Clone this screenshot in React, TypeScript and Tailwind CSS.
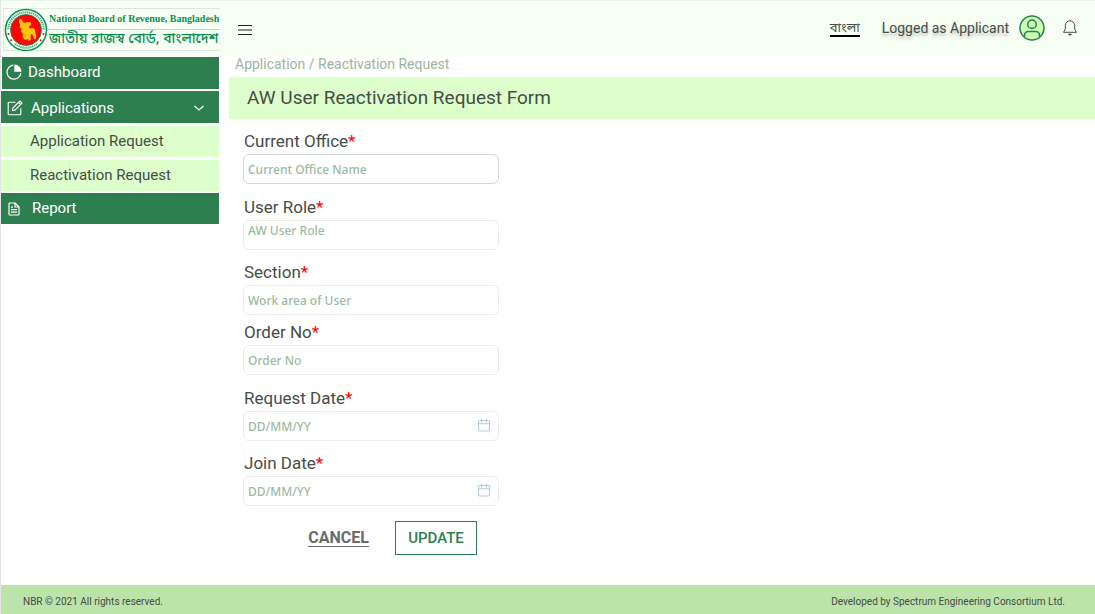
import type { ReactNode } from 'react';

type FieldProps = {
    id: string;
    label: string;
    placeholder: string;
    className?: string;
    inputClassName?: string;
    icon?: ReactNode;
};

const CalendarIcon = () => (
    <svg viewBox="0 0 14 14" className="size-3.5" fill="none" stroke="#b4cbd3" strokeWidth="1.1" strokeLinecap="round">
        <rect x="1.5" y="2.5" width="11" height="10.5" rx="1.5" />
        <path d="M1.5 5.8h11M4.5 1v3M9.5 1v3" />
    </svg>
);

const Field = ({ id, label, placeholder, className = '', inputClassName = 'border-[#ececec]', icon }: FieldProps) => (
    <div className={className}>
        <label htmlFor={id} className="block pl-px text-[17px] leading-6 text-[#464d46]">
            {label}
            <span className="text-[#ff0000]">*</span>
        </label>
        <div className="relative mt-px">
            <input
                id={id}
                type="text"
                placeholder={placeholder}
                className={`block h-[30px] w-full rounded-md border bg-white px-1 font-['Noto_Sans',sans-serif] text-xs font-medium text-[#464d46] outline-none placeholder:text-[#9dbba0] ${inputClassName}`}
            />
            {icon && <span className="pointer-events-none absolute top-[7px] right-2">{icon}</span>}
        </div>
    </div>
);

const Emblem = () => (
    <svg viewBox="0 0 44 44" className="size-11 shrink-0">
        <circle cx="22" cy="22" r="20.5" fill="#fff" stroke="#0b8f50" strokeWidth="1.6" />
        <circle
            cx="22"
            cy="22"
            r="17.7"
            fill="none"
            stroke="#4fae7f"
            strokeWidth="2.2"
            strokeDasharray="1.3 0.7"
        />
        <path d="M2.6 22a19.4 19.4 0 0 0 7 14.5l3-3.6A15 15 0 0 1 7 22zM41.4 22a19.4 19.4 0 0 1-7 14.5l-3-3.6A15 15 0 0 0 37 22z" fill="#fff" />
        <circle cx="22" cy="22" r="15.5" fill="#fb0505" stroke="#0b8f50" strokeWidth="0.8" />
        <path
            d="M15.5 10.5l2.7 1.3.4 2.4 3 .5 1.7-.7 3.3.5.9 1.8-1.7 1.5-1 2 1.6.6 2.7-.4 1.8 1.5.4 3 1.1 3.6-.9 3.4-1.5-.5-.9-3.2-1.5-2-1 2.3.2 3.6-2.1 1.3-1.1-2.2-1.5 1.2-2.4-.9-1.1-2.6.2-2.7-1.8-2.4.4-2.5-2-1.9.8-2.5-1.3-2.4.4-2.2z"
            fill="#ffc20e"
        />
        <g fill="#fb0505">
            <circle cx="4.5" cy="26" r="1" />
            <circle cx="7.2" cy="32.3" r="1" />
            <circle cx="39.5" cy="26" r="1" />
            <circle cx="36.8" cy="32.3" r="1" />
        </g>
    </svg>
);

const Logo = () => (
    <a href="#" className="mt-[7px] ml-0.5 flex h-[43px] w-[217px] items-center border border-r-0 border-[#dfe8df] text-[#0b8f50]">
        <Emblem />
        <span className="flex min-w-0 flex-1 flex-col whitespace-nowrap">
            <span className="border-b border-[#b9dcc6] pl-px font-['Liberation_Serif',serif] text-[10px] leading-5 font-bold">
                National Board of Revenue, Bangladesh
            </span>
            <span className="pl-px font-['Noto_Sans_Bengali',sans-serif] text-sm leading-5 font-medium">
                জাতীয় রাজস্ব বোর্ড, বাংলাদেশ
            </span>
        </span>
    </a>
);

const PieIcon = () => (
    <svg viewBox="0 0 16 16" className="size-4">
        <path d="M7.2 1.2A7 7 0 1 0 14.9 9.2" fill="none" stroke="#fff" strokeWidth="1.2" />
        <path d="M8.3.5v7.3h7.2A7.3 7.3 0 0 0 8.3.5z" fill="#fff" />
    </svg>
);

const EditIcon = () => (
    <svg viewBox="0 0 16 16" className="size-4" fill="none" stroke="#fff" strokeWidth="1.1" strokeLinejoin="round" strokeLinecap="round">
        <path d="M8 2.2H2.2a1 1 0 0 0-1 1v10.6a1 1 0 0 0 1 1h10.6a1 1 0 0 0 1-1V8.5" />
        <path d="M5.3 10.8l.6-2.8 7-7 2.1 2.1-7 7zM11.5 2.4l2.1 2.1" />
    </svg>
);

const ReportIcon = () => (
    <svg viewBox="0 0 12 14" className="h-3.5 w-3" fill="none" stroke="#fff" strokeWidth="1.2" strokeLinejoin="round">
        <path d="M1 1.8a.8.8 0 0 1 .8-.8H7l4 4v7.2a.8.8 0 0 1-.8.8H1.8a.8.8 0 0 1-.8-.8z" />
        <path d="M7 1v4h4M3 5.2h2M3 7.7h6M3 10.2h6" />
    </svg>
);

const Sidebar = () => (
    <nav className="w-[218px] shrink-0 text-[15px] text-white">
        <a href="#" className="mt-px ml-px flex h-8 items-center gap-1.5 bg-[#2e7f50] pb-0.5 pl-1">
            <PieIcon />
            Dashboard
        </a>
        <button type="button" className="mt-0.5 flex h-8 w-full items-center gap-2 bg-[#2e7f50] pt-0.5 pr-3.5 pl-1.5">
            <EditIcon />
            Applications
            <svg viewBox="0 0 12 12" className="ml-auto size-3" fill="none" stroke="#fff" strokeWidth="1.2">
                <path d="M1.5 4L6 8l4.5-4" />
            </svg>
        </button>
        <a href="#" className="mt-[3px] flex h-[31px] items-center bg-[#dcffcc] pl-[29px] text-[#464d46]">
            Application Request
        </a>
        <a href="#" className="mt-[3px] flex h-[31px] items-center bg-[#dcffcc] pl-[29px] text-[#464d46]">
            Reactivation Request
        </a>
        <a href="#" className="mt-0.5 flex h-[31px] items-center gap-3 bg-[#2e7f50] pl-[7px]">
            <ReportIcon />
            Report
        </a>
    </nav>
);

const Header = () => (
    <header className="flex h-14 items-start border-t border-[#eef2ec] bg-[#f7fff4]">
        <Logo />
        <button type="button" aria-label="Toggle menu" className="mt-[23px] ml-[18px]">
            <svg viewBox="0 0 14 12" className="h-3 w-3.5" stroke="#222" strokeWidth="1.2">
                <path d="M0 1.5h14M0 6h14M0 10.5h14" />
            </svg>
        </button>
        <div className="ml-auto flex h-[54px] items-center pr-[18px]">
            <a href="#" className="border-b-2 border-black pt-1 font-['Noto_Sans_Bengali',sans-serif] text-[13px] leading-3 text-[#464d46]">
                বাংলা
            </a>
            <span className="ml-[22px] text-sm text-[#464d46] text-shadow-[0_3px_3px_rgb(0_0_0_/_0.25)]">
                Logged as Applicant
            </span>
            <button type="button" aria-label="Profile" className="ml-2.5">
                <svg viewBox="0 0 26 26" className="size-[26px]" fill="#ccffb3" stroke="#2e7f50" strokeWidth="1.5">
                    <circle cx="13" cy="13" r="12" />
                    <circle cx="13" cy="9.3" r="4.3" />
                    <path d="M5.5 22.3v-2.1a3.7 3.7 0 0 1 3.7-3.7h7.6a3.7 3.7 0 0 1 3.7 3.7v2.1" />
                </svg>
            </button>
            <button type="button" aria-label="Notifications" className="ml-[18px]">
                <svg viewBox="0 0 14 16" className="h-4 w-3.5" fill="none" stroke="#464d46" strokeLinejoin="round">
                    <path d="M7 .8a4.7 4.7 0 0 0-4.7 4.7V9L.6 12.3h12.8L11.7 9V5.5A4.7 4.7 0 0 0 7 .8z" />
                    <path d="M5.5 14.2c.5 1.2 2.5 1.2 3 0z" fill="#464d46" />
                </svg>
            </button>
        </div>
    </header>
);

const RequestForm = () => (
    <form className="mt-2.5 ml-3.5 w-[256px]" onSubmit={(event) => event.preventDefault()}>
        <Field
            id="office"
            label="Current Office"
            placeholder="Current Office Name"
            inputClassName="border-[#cfd8dc]"
        />
        <Field
            id="role"
            label="User Role"
            placeholder="AW User Role"
            className="mt-[11px]"
            inputClassName="border-[#ececec] pb-2.5"
        />
        <Field id="section" label="Section" placeholder="Work area of User" className="mt-2.5" />
        <Field id="order" label="Order No" placeholder="Order No" className="mt-[5px]" />
        <Field
            id="request-date"
            label="Request Date"
            placeholder="DD/MM/YY"
            className="mt-[11px]"
            icon={<CalendarIcon />}
        />
        <Field
            id="join-date"
            label="Join Date"
            placeholder="DD/MM/YY"
            className="mt-2.5"
            icon={<CalendarIcon />}
        />
        <div className="mt-[15px] flex items-center justify-end gap-[26px] pr-[22px] font-medium">
            <button type="button" className="border-b border-[#6b6b6b] text-base leading-[17px] font-bold text-[#6b6b6b]">
                CANCEL
            </button>
            <button type="submit" className="h-[34px] w-[82px] border border-[#2e7f50] text-[15px] text-[#2e7f50]">
                UPDATE
            </button>
        </div>
    </form>
);

export default function App() {
    return (
        <div className="flex min-h-screen flex-col border-l border-[#e5e5e5] bg-white font-[Roboto,sans-serif]">
            <Header />
            <div className="flex flex-1">
                <Sidebar />
                <main className="ml-2.5 flex-1">
                    <p className="pt-px pl-1.5 text-sm leading-[14px] text-[#9db5a0]">Application / Reactivation Request</p>
                    <h1 className="mt-1.5 flex h-[42px] items-center bg-[#dcffcc] pl-[18px] text-[19px] text-[#464d46]">
                        AW User Reactivation Request Form
                    </h1>
                    <RequestForm />
                </main>
            </div>
            <footer className="flex h-[29px] items-center justify-between bg-[#bbe3aa] pt-1 pr-[30px] pl-[22px] text-[10px] text-[#464d46]">
                <span>NBR © 2021 All rights reserved.</span>
                <span>Developed by Spectrum Engineering Consortium Ltd.</span>
            </footer>
        </div>
    );
}
